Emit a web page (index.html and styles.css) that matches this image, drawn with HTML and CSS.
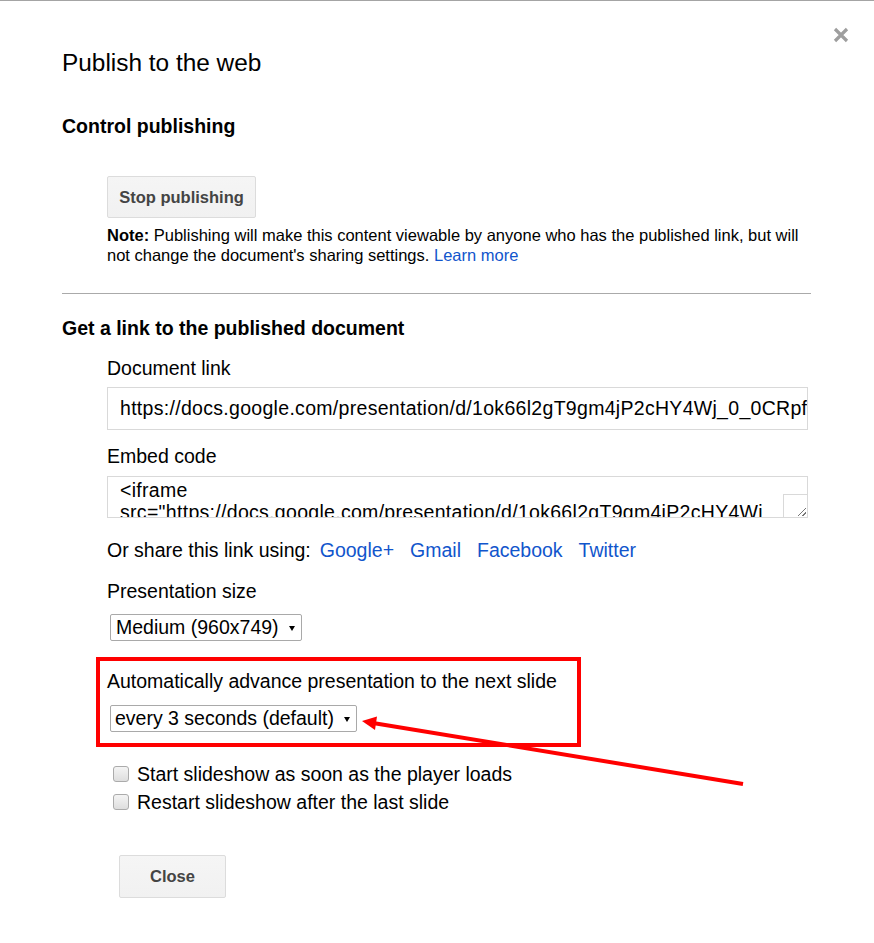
FILE: index.html
```html
<!DOCTYPE html>
<html>
<head>
<meta charset="utf-8">
<title>Publish to the web</title>
<link rel="stylesheet" href="styles.css">
</head>
<body>
<div class="topline"></div>
<div class="dialog">
  <h1 class="title">Publish to the web</h1>

  <h2 class="section">Control publishing</h2>
  <div class="indent">
    <div class="btn stop">Stop publishing</div>
    <p class="note"><b>Note:</b> Publishing will make this content viewable by anyone who has the published link, but will<br>not change the document's sharing settings. <a class="link">Learn more</a></p>
  </div>

  <div class="divider"></div>

  <h2 class="section section-2">Get a link to the published document</h2>
  <div class="indent">
    <div class="label label-first">Document link</div>
    <div class="field">https://docs.google.com/presentation/d/1ok66l2gT9gm4jP2cHY4Wj_0_0CRpf</div>

    <div class="label label-embed">Embed code</div>
    <div class="textarea">
      <div class="ta-line">&lt;iframe</div>
      <div class="ta-line">src="https://docs.google.com/presentation/d/1ok66l2gT9gm4jP2cHY4Wj</div>
      <div class="ta-corner"><span class="grip"></span></div>
    </div>

    <div class="share">Or share this link using:<a class="link share-first">Google+</a><a class="link share-next">Gmail</a><a class="link share-next">Facebook</a><a class="link share-next">Twitter</a></div>

    <div class="label label-size">Presentation size</div>
    <div class="select select-size"><span>Medium (960x749)</span><span class="caret"></span></div>
  </div>

  <div class="redbox">
    <div class="label">Automatically advance presentation to the next slide</div>
    <div class="select select-advance"><span>every 3 seconds (default)</span><span class="caret"></span></div>
  </div>

  <div class="indent checks">
    <div class="check-row"><span class="checkbox"></span><span>Start slideshow as soon as the player loads</span></div>
    <div class="check-row"><span class="checkbox"></span><span>Restart slideshow after the last slide</span></div>
    <div class="btn close-btn">Close</div>
  </div>
</div>

<svg class="close-x" width="16" height="16" viewBox="0 0 16 16">
  <path d="M2 2 L14 14 M14 2 L2 14" stroke="#9e9e9e" stroke-width="3.2" fill="none"/>
</svg>

<svg class="annot" width="874" height="943" viewBox="0 0 874 943">
  <line x1="743" y1="784" x2="373" y2="723" stroke="#ff0000" stroke-width="4"/>
  <polygon points="362,721 377,716.5 375,730" fill="#ff0000"/>
</svg>
</body>
</html>
```

FILE: styles.css
```css
html, body {
  margin: 0;
  padding: 0;
  background: #ffffff;
}

body {
  font-family: "Liberation Sans", Arial, sans-serif;
  color: #000;
  width: 874px;
  height: 943px;
  position: relative;
  overflow: hidden;
}

.topline {
  height: 1px;
  background: #a4a4a4;
}

.dialog {
  padding: 0 63px 0 62px;
}

.title {
  margin: 48px 0 0;
  font-size: 24.4px;
  line-height: 28px;
  font-weight: normal;
}

.section {
  margin: 37px 0 0;
  font-size: 19.5px;
  line-height: 24px;
  font-weight: bold;
}

.section-2 {
  margin-top: 22px;
}

.indent {
  margin-left: 45px;
}

.btn {
  box-sizing: border-box;
  display: flex;
  align-items: center;
  justify-content: center;
  border: 1px solid #dcdcdc;
  border-radius: 2px;
  background: linear-gradient(#f5f5f5, #f1f1f1);
  color: #444;
  font-size: 16.5px;
  font-weight: bold;
}

.stop {
  margin-top: 38px;
  width: 149px;
  height: 42px;
}

.note {
  margin: 8px 0 0;
  font-size: 16.5px;
  line-height: 19.5px;
}

.link {
  color: #1155cc;
  text-decoration: none;
}

.divider {
  margin-top: 28px;
  height: 1px;
  background: #aaaaaa;
}

.label {
  font-size: 19.5px;
  line-height: 24px;
}

.label-first {
  margin-top: 16px;
}

.label-embed {
  margin-top: 14px;
}

.label-size {
  margin-top: 17px;
}

.field {
  box-sizing: border-box;
  margin-top: 7px;
  width: 701px;
  height: 43px;
  border: 1px solid #d9d9d9;
  padding-left: 12px;
  font-size: 19.5px;
  line-height: 41px;
  letter-spacing: 0.3px;
  white-space: nowrap;
  overflow: hidden;
}

.textarea {
  box-sizing: border-box;
  position: relative;
  margin-top: 8px;
  width: 701px;
  height: 42px;
  border: 1px solid #d9d9d9;
  padding: 2px 0 0 12px;
  font-size: 19.5px;
  line-height: 22px;
  letter-spacing: 0.3px;
  overflow: hidden;
}

.ta-line {
  white-space: nowrap;
}

.ta-corner {
  position: absolute;
  right: 0;
  bottom: 0;
  width: 24px;
  height: 23px;
  box-sizing: border-box;
  border-left: 1px solid #d9d9d9;
  border-top: 1px solid #d9d9d9;
  background: #fff;
}

.grip {
  position: absolute;
  right: 1px;
  bottom: 1px;
  width: 8px;
  height: 8px;
  background: linear-gradient(135deg, transparent 45%, #777 45%, #777 55%, transparent 55%, transparent 72%, #777 72%, #777 82%, transparent 82%);
}

.share {
  margin-top: 20px;
  display: flex;
  font-size: 19.5px;
  line-height: 24px;
  white-space: nowrap;
}

.share-first {
  margin-left: 9px;
}

.share-next {
  margin-left: 16px;
}

.select {
  box-sizing: border-box;
  display: flex;
  align-items: center;
  justify-content: space-between;
  margin-left: 3px;
  height: 27px;
  border: 1px solid #a9a9a9;
  border-radius: 2px;
  padding: 0 6px 0 5px;
  font-size: 19.5px;
  line-height: 25px;
  white-space: nowrap;
}

.select-size {
  margin-top: 11px;
  width: 192px;
}

.select-advance {
  margin-top: 12px;
  width: 247px;
  padding-left: 4px;
}

.caret {
  width: 0;
  height: 0;
  border-left: 3px solid transparent;
  border-right: 3px solid transparent;
  border-top: 5px solid #000;
  margin-top: 1px;
}

.redbox {
  box-sizing: border-box;
  margin: 16px 0 0 34px;
  width: 485px;
  border: 4px solid #ff0000;
  padding: 8px 0 11px 7px;
}

.checks {
  margin-top: 13px;
}

.check-row {
  display: flex;
  align-items: center;
  height: 28px;
  font-size: 19.5px;
  line-height: 24px;
}

.checkbox {
  box-sizing: border-box;
  width: 16px;
  height: 16px;
  margin: 0 8px 0 6px;
  border: 1px solid #ababab;
  border-radius: 3px;
  background: linear-gradient(#f4f4f4, #dedede);
}

.close-btn {
  margin: 39px 0 0 12px;
  width: 107px;
  height: 43px;
}

.close-x {
  position: absolute;
  top: 27px;
  right: 25px;
}

.annot {
  position: absolute;
  top: 0;
  left: 0;
  pointer-events: none;
}
```
